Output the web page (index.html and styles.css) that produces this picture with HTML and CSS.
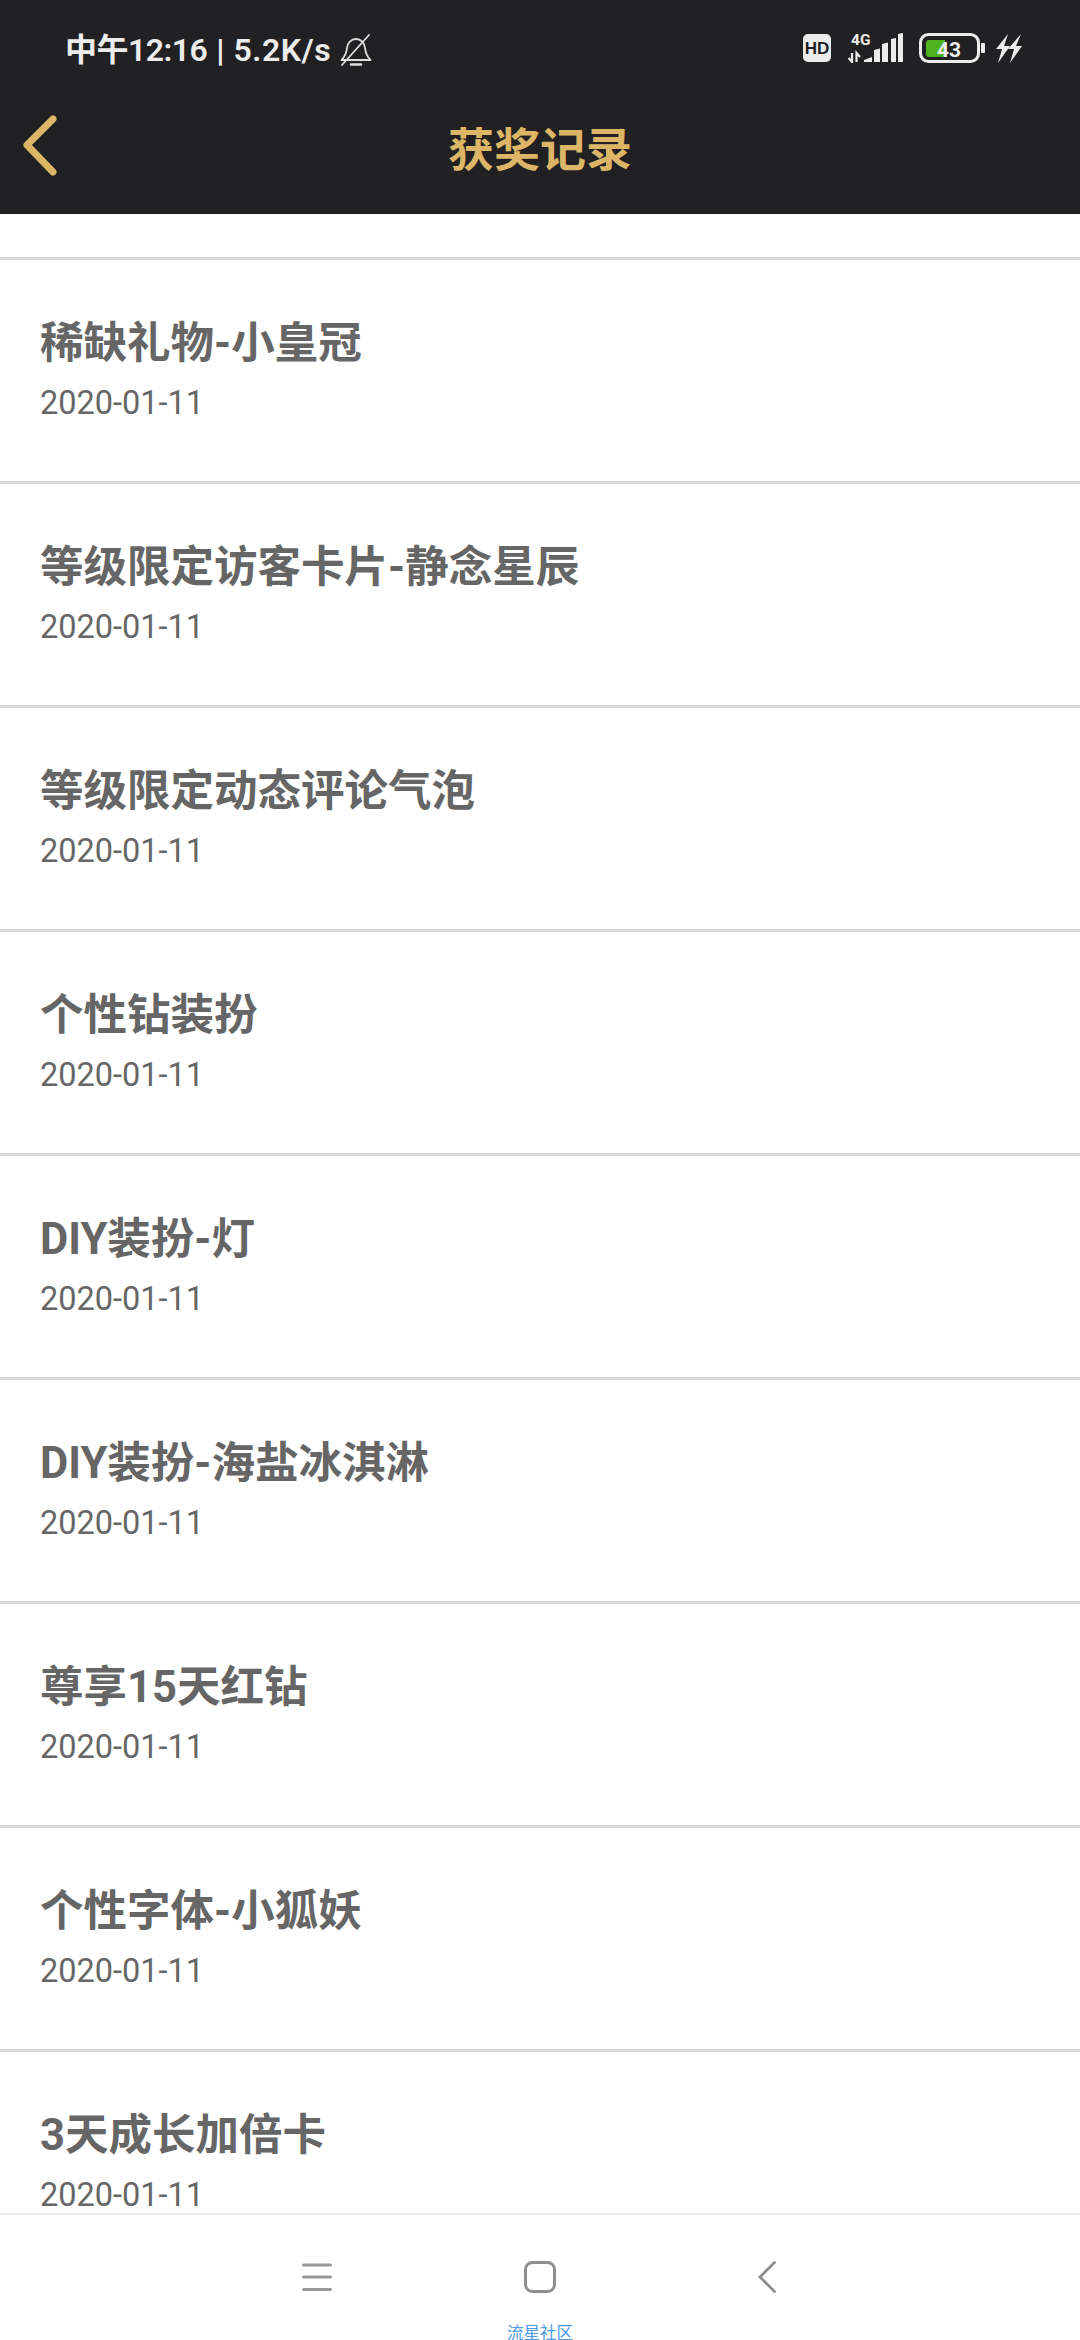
FILE: index.html
```html
<!DOCTYPE html>
<html lang="zh-CN">
<head>
<meta charset="utf-8">
<title>获奖记录</title>
<link rel="stylesheet" href="styles.css">
</head>
<body>
<div class="screen">
  <header class="header">
    <div class="status">
      <div class="status-left">
        <span class="status-time">中午12:16</span>
        <span class="status-sep">|</span>
        <span class="status-speed">5.2K/s</span>
        <svg class="bell" width="32" height="32" viewBox="0 0 32 32" fill="none" stroke="#dedede" stroke-width="1.8" stroke-linejoin="round" stroke-linecap="round">
          <path d="M1.5 26h29c-3-3-5-7-5.5-12-.5-5-4-9-9-9-5 0-8.500 4-9 9-.5 5-2.500 9-5.500 12z"/>
          <path d="M11 30.500h10" stroke-width="2.400"/>
          <path d="M2 31L29 1"/>
        </svg>
      </div>
      <div class="status-right">
        <svg class="hd" width="28" height="28" viewBox="0 0 28 28">
          <rect width="28" height="28" rx="5" fill="#ececec"/>
          <text x="14" y="20" text-anchor="middle" class="hd-text">HD</text>
        </svg>
        <svg class="signal" width="55" height="36" viewBox="0 -6 55 36">
          <text x="3" y="12" class="net-text">4G</text>
          <path d="M4 20v9L0.500 25M8.500 29v-9l3.500 4" stroke="#ececec" stroke-width="2.200" fill="none"/>
          <path d="M16 29v-2l8-3v5zM26 29V17l6-1.500V29zM34 29V11l6-1.500V29zM43 29V6l5-1V29zM50 29V1l5-1V29z" fill="#ececec"/>
        </svg>
        <svg class="battery" width="66" height="30" viewBox="0 0 66 30">
          <rect x="1.500" y="1.500" width="58" height="27" rx="8" fill="none" stroke="#ececec" stroke-width="3"/>
          <path d="M7 10a3 3 0 0 1 3-3h16v17H10a3 3 0 0 1-3-3z" fill="#4fb31f"/>
          <text x="30" y="24" text-anchor="middle" class="battery-text">43</text>
          <rect x="62" y="10" width="4" height="10" rx="1" fill="#ececec"/>
        </svg>
        <svg class="bolt" width="26" height="29" viewBox="0 0 26 29">
          <path d="M12 0L0 15h6L2 29 14 12H8zM25 0L12 15h6l-4 14 12-17h-6z" fill="#ececec"/>
        </svg>
      </div>
    </div>
    <div class="toolbar">
      <svg class="back" width="36" height="62" viewBox="0 0 36 62" fill="none" stroke="#dcb566" stroke-width="7" stroke-linecap="round" stroke-linejoin="round">
        <path d="M31 4L5 30l26 27"/>
      </svg>
      <h1 class="title">获奖记录</h1>
    </div>
  </header>

  <main class="list">
    <div class="item"><div class="name">稀缺礼物-小皇冠</div><div class="date">2020-01-11</div></div>
    <div class="item"><div class="name">等级限定访客卡片-静念星辰</div><div class="date">2020-01-11</div></div>
    <div class="item"><div class="name">等级限定动态评论气泡</div><div class="date">2020-01-11</div></div>
    <div class="item"><div class="name">个性钻装扮</div><div class="date">2020-01-11</div></div>
    <div class="item"><div class="name">DIY装扮-灯</div><div class="date">2020-01-11</div></div>
    <div class="item"><div class="name">DIY装扮-海盐冰淇淋</div><div class="date">2020-01-11</div></div>
    <div class="item"><div class="name">尊享15天红钻</div><div class="date">2020-01-11</div></div>
    <div class="item"><div class="name">个性字体-小狐妖</div><div class="date">2020-01-11</div></div>
    <div class="item"><div class="name">3天成长加倍卡</div><div class="date">2020-01-11</div></div>
  </main>

  <footer class="navbar">
    <div class="nav-icons">
      <svg width="30" height="28" viewBox="0 0 30 28" stroke="#999" stroke-width="3" stroke-linecap="round" fill="none">
        <path d="M1.500 2h27M1.500 14h27M1.500 26.500h27"/>
      </svg>
      <svg class="nav-home" width="32" height="32" viewBox="0 0 32 32" fill="none" stroke="#8e8e8e" stroke-width="3">
        <rect x="1.500" y="1.500" width="29" height="29" rx="7"/>
      </svg>
      <svg class="nav-back" width="18" height="32" viewBox="0 0 18 32" fill="none" stroke="#8e8e8e" stroke-width="2.800" stroke-linecap="round">
        <path d="M16.500 1.500L2 16l14.500 14.500"/>
      </svg>
    </div>
    <div class="watermark">流星社区</div>
  </footer>
</div>
</body>
</html>
```
FILE: styles.css
```css
* { box-sizing: border-box; margin: 0; padding: 0; }
html, body { width: 1080px; height: 2340px; overflow: hidden; background: #fff; }
body { font-family: Roboto, "Noto Sans CJK SC", sans-serif; }
.screen { width: 1080px; height: 2340px; display: flex; flex-direction: column; overflow: hidden; }

.header { height: 214px; flex: none; background: #212123; display: flex; flex-direction: column; }
.status { height: 96px; display: flex; justify-content: space-between; align-items: flex-start; padding: 33px 58px 0 65px; }
.status-left { display: flex; align-items: center; }
.status-time, .status-sep, .status-speed { font-size: 32px; line-height: 34px; font-weight: 600; color: #ececec; }
.status-time { letter-spacing: -0.5px; }
.status-sep { margin-left: 9px; font-weight: 900; }
.status-speed { margin-left: 9px; letter-spacing: 0.5px; }
.bell { margin-left: 9px; }
.status-right { display: flex; align-items: flex-start; }
.hd { margin-right: 17px; margin-top: 1px; }
.signal { margin-right: 16px; margin-top: -6px; }
.battery { margin-right: 11px; }
.bolt { margin-top: 1px; }
.hd-text { font: 700 17px "Liberation Sans", sans-serif; fill: #212123; }
.net-text { font: 700 15.500px Roboto, sans-serif; fill: #ececec; }
.battery-text { font: 700 21px Roboto, sans-serif; fill: #ececec; }

.toolbar { flex: 1; display: flex; align-items: center; justify-content: center; position: relative; padding-bottom: 18px; }
.back { position: absolute; left: 22px; top: 19px; }
.title { font-size: 46px; line-height: 60px; font-weight: 700; color: #dcb566; font-family: "Noto Sans CJK SC", sans-serif; }

.list { flex: 1; min-height: 0; overflow: hidden; padding-top: 43px; }
.item { height: 224px; border-top: 3px solid #d9d9d9; padding-top: 54px; }
.name { font-size: 43.500px; line-height: 60px; font-weight: 700; color: #666; padding-left: 40px; }
.date { font-size: 32.500px; line-height: 40px; font-weight: 400; color: #666; margin-top: 9px; padding-left: 40px; }

.navbar { height: 127px; flex: none; background: #fff; border-top: 2px solid #ececec; position: relative; }
.nav-icons { display: flex; align-items: center; margin-left: 302px; height: 124px; }
.nav-home { margin-left: 192px; }
.nav-back { margin-left: 202px; }
.watermark { position: absolute; left: 0; right: 0; top: 105px; text-align: center; font-size: 16.500px; line-height: 24px; color: #4a9ae8; font-family: "Noto Sans CJK SC", sans-serif; }
```
